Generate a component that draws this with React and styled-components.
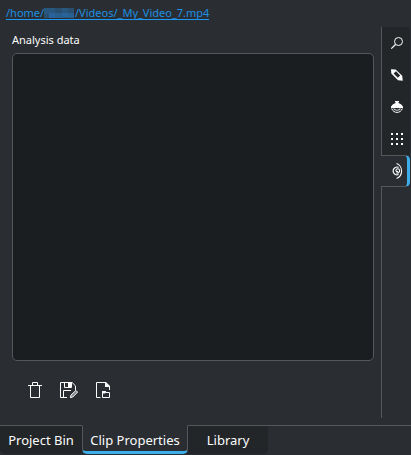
import React from "react";
import styled, { createGlobalStyle, css } from "styled-components";

const line = "#55585b";

const Global = createGlobalStyle`
  * { box-sizing: border-box; }
  body { margin: 0; background: #2a2e32; overflow: hidden; }
`;

const Window = styled.div`
  width: 411px;
  height: 455px;
  display: flex;
  flex-direction: column;
  background: #2a2e32;
  color: #fcfcfc;
  font-family: "Noto Sans", sans-serif;
`;

const PathRow = styled.header`
  display: flex;
  align-items: flex-start;
  height: 27px;
  padding: 5px 0 0 6px;
`;

const FileLink = styled.a`
  display: flex;
  align-items: flex-start;
  height: 15px;
  border-bottom: 1px solid #1d99f3;
  color: #1d8fe2;
  font-size: 11px;
  line-height: 16px;
  white-space: pre;
`;

const PathPart = styled.span`
  width: ${(p) => p.$width}px;
`;

const Redacted = styled.svg`
  width: 30px;
  height: 10px;
  margin: 3px 1px 0 0;
`;

const Main = styled.main`
  display: flex;
  height: 391px;
`;

const Page = styled.section`
  width: 381px;
  padding: 5px 7px 0 12px;
`;

const Label = styled.div`
  height: 21px;
  font-size: 11px;
  line-height: 16px;
`;

const DataBox = styled.div`
  height: 308px;
  border: 1px solid ${line};
  border-radius: 5px;
  background: #1b1e20;
`;

const Actions = styled.div`
  display: flex;
  gap: 12px;
  padding: 18px 0 0 12px;
`;

const iconButton = css`
  display: flex;
  align-items: center;
  justify-content: center;
  padding: 0;
  background: none;
  border: 0;
  color: inherit;
`;

const ActionButton = styled.button`
  ${iconButton}
  width: 22px;
  height: 22px;
`;

const SideTabs = styled.nav`
  width: 30px;
  border-left: 1px solid ${line};
`;

const SideTab = styled.button`
  ${iconButton}
  width: 28px;
  height: 32px;
  padding-left: 2px;
  background: #232629;
  border-radius: ${(p) => (p.$first ? "0 5px 0 0" : "0")};

  ${(p) =>
    p.$active &&
    css`
      width: 29px;
      margin-left: -1px;
      padding-left: 6px;
      background: #2a2e32;
      border-top: 1px solid ${line};
      border-bottom: 1px solid ${line};
      border-right: 3px solid #3daee9;
      border-radius: 0 5px 5px 0;
    `}
`;

const BottomTabs = styled.nav`
  display: flex;
  height: 30px;
  margin-top: 7px;
`;

const BottomTab = styled.button`
  width: ${(p) => p.$width}px;
  height: 29px;
  padding: 0;
  border: 0;
  border-top: 1px solid ${line};
  border-radius: ${(p) => (p.$active ? "0 0 5px 5px" : p.$last ? "0 0 5px 0" : "0 0 0 5px")};
  background: #232629;
  color: inherit;
  font: 13px/18px "Noto Sans", sans-serif;
  white-space: nowrap;

  ${(p) =>
    p.$active &&
    css`
      border: 1px solid ${line};
      border-top: 1px solid #2a2e32;
      border-bottom: 3px solid #3daee9;
      background: #2a2e32;
      padding-top: 3px;
    `}
`;

const TabFill = styled.div`
  flex: 1;
  border-top: 1px solid ${line};
`;

const Icon = ({ size = 16, children }) => (
  <svg width={size} height={size} viewBox={`0 0 ${size} ${size}`} fill="none" stroke="#fcfcfc">
    {children}
  </svg>
);

const SearchIcon = () => (
  <Icon>
    <circle cx="9.5" cy="6.5" r="4" />
    <path d="M6.5 9.5 2.3 13.7" strokeWidth="1.2" />
  </Icon>
);

const MarkerIcon = () => (
  <Icon>
    <path
      d="M2 2.2 6.6 2.5 13.2 8.8 13.8 13.8 9 13.2 2.3 6.6zM7 4.2 4.6 6.6 8.8 10.8 11.2 8.4z"
      fill="#fcfcfc"
      fillRule="evenodd"
      stroke="none"
    />
  </Icon>
);

const LampIcon = () => (
  <Icon>
    <path d="M6 2h4v1H9.5v1L12 5.2 14 7.6V9H2V7.6l2-2.4L6.5 4V3H6z" fill="#fcfcfc" stroke="none" />
    <path d="M2.7 9.5c.8 2.6 3 3.9 5.3 3.9s4.5-1.3 5.3-3.9" />
    <path d="M4.5 9.5c1.4 2.3 5.6 2.3 7 0" strokeWidth="1.2" opacity=".8" />
  </Icon>
);

const GridIcon = () => (
  <Icon>
    <path d="M2 3h12M2 8h12M2 13h12" strokeWidth="2" strokeDasharray="2 3" />
  </Icon>
);

const SpiralIcon = () => (
  <Icon>
    <path d="M7.5.6C10.3 1.5 12.6 4.6 12.6 8s-2 6.3-5 7.4" strokeWidth="1.1" />
    <path d="M9.6 4.4A3.9 3.9 0 1 0 9.6 11.5" strokeWidth="1.2" />
    <path d="M7.4 10C9.7 10.5 10.8 8.8 10.6 7.4 10.2 5.4 7.6 5.2 7 7c-.4 1.4 1.3 2.1 1.9 1" strokeWidth="1.1" />
  </Icon>
);

const TrashIcon = () => (
  <Icon size={22}>
    <path d="M4 6.5h14M8.5 6V3.5h5V6M6.5 7v11.5h9V7" />
  </Icon>
);

const SaveEditIcon = () => (
  <Icon size={22}>
    <path d="M9 18.5H2.5v-15h11.6l3.4 3.4V11M6.5 4v4.5h7V4M5.5 18v-6.5H13" />
    <path d="M10 4h3v4h-3z" fill="#fcfcfc" stroke="none" />
    <path d="m12.4 18.6.5-2.4 5-4.8 1.7 1.7-4.9 5z" strokeWidth="1" fill="#85888b" />
  </Icon>
);

const OpenFileIcon = () => (
  <Icon size={22}>
    <path d="M8.5 18.5h-4v-15H14M17.5 8v3" />
    <path d="M13 3v5h5V7l-4-4z" fill="#fcfcfc" stroke="none" />
    <path d="M10.5 12.5v6h7v-5H14" />
    <path d="M10 12h4v1.5L13 14.5H10z" fill="#fcfcfc" stroke="none" />
  </Icon>
);

export default function App() {
  return (
    <>
      <Global />
      <Window>
        <PathRow>
          <FileLink>
            <PathPart $width={38}>/home/</PathPart>
            <Redacted viewBox="0 0 30 10" shapeRendering="crispEdges">
              <path fill="#285780" d="M0 0h30v10H0z" />
              <path fill="#29639a" d="M5 5h6v5H5zM18 5h6v4h-6z" />
              <path fill="#294f70" d="M11 0h7v5h-7zM24 0h6v5h-6zM0 6h5v4H0z" />
              <path fill="#285f8e" d="M11 5h7v5h-7zM24 5h6v5h-6z" />
            </Redacted>
            <PathPart $width={134}>/Videos/_My_Video_7.mp4</PathPart>
          </FileLink>
        </PathRow>
        <Main>
          <Page>
            <Label>Analysis data</Label>
            <DataBox />
            <Actions>
              <ActionButton aria-label="Delete analysis"><TrashIcon /></ActionButton>
              <ActionButton aria-label="Export analysis"><SaveEditIcon /></ActionButton>
              <ActionButton aria-label="Import analysis"><OpenFileIcon /></ActionButton>
            </Actions>
          </Page>
          <SideTabs>
            <SideTab $first aria-label="Properties"><SearchIcon /></SideTab>
            <SideTab aria-label="Markers"><MarkerIcon /></SideTab>
            <SideTab aria-label="Force properties"><LampIcon /></SideTab>
            <SideTab aria-label="Metadata"><GridIcon /></SideTab>
            <SideTab $active aria-label="Analysis"><SpiralIcon /></SideTab>
          </SideTabs>
        </Main>
        <BottomTabs>
          <BottomTab $width={82}>Project Bin</BottomTab>
          <BottomTab $width={106} $active>Clip Properties</BottomTab>
          <BottomTab $width={80} $last>Library</BottomTab>
          <TabFill />
        </BottomTabs>
      </Window>
    </>
  );
}
